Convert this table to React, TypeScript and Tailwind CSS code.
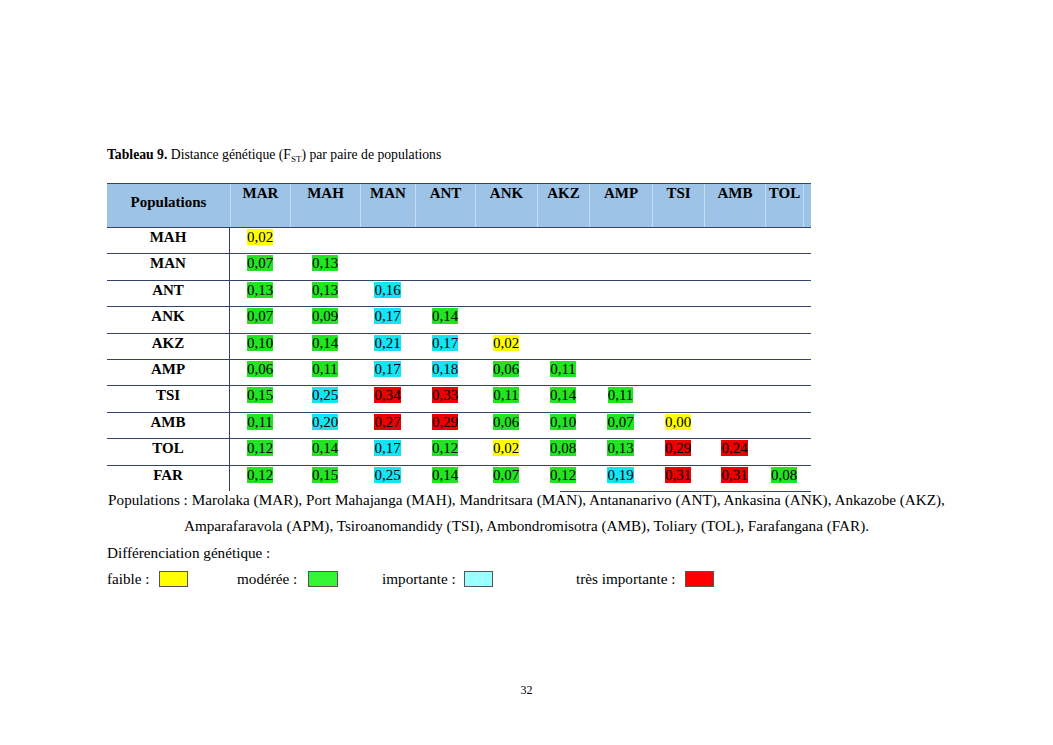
import React from 'react';

type Level = 'y' | 'g' | 'c' | 'r';

const highlight: Record<Level, string> = {
  y: 'bg-[#ffff00]',
  g: 'bg-[#22e422]',
  c: 'bg-[#14e4f4]',
  r: 'bg-[#ec0000]',
};

const columns = ['MAR', 'MAH', 'MAN', 'ANT', 'ANK', 'AKZ', 'AMP', 'TSI', 'AMB', 'TOL'];

const rows: { name: string; values: [string, Level][] }[] = [
  { name: 'MAH', values: [['0,02', 'y']] },
  { name: 'MAN', values: [['0,07', 'g'], ['0,13', 'g']] },
  { name: 'ANT', values: [['0,13', 'g'], ['0,13', 'g'], ['0,16', 'c']] },
  { name: 'ANK', values: [['0,07', 'g'], ['0,09', 'g'], ['0,17', 'c'], ['0,14', 'g']] },
  { name: 'AKZ', values: [['0,10', 'g'], ['0,14', 'g'], ['0,21', 'c'], ['0,17', 'c'], ['0,02', 'y']] },
  { name: 'AMP', values: [['0,06', 'g'], ['0,11', 'g'], ['0,17', 'c'], ['0,18', 'c'], ['0,06', 'g'], ['0,11', 'g']] },
  { name: 'TSI', values: [['0,15', 'g'], ['0,25', 'c'], ['0,34', 'r'], ['0,33', 'r'], ['0,11', 'g'], ['0,14', 'g'], ['0,11', 'g']] },
  { name: 'AMB', values: [['0,11', 'g'], ['0,20', 'c'], ['0,27', 'r'], ['0,29', 'r'], ['0,06', 'g'], ['0,10', 'g'], ['0,07', 'g'], ['0,00', 'y']] },
  { name: 'TOL', values: [['0,12', 'g'], ['0,14', 'g'], ['0,17', 'c'], ['0,12', 'g'], ['0,02', 'y'], ['0,08', 'g'], ['0,13', 'g'], ['0,29', 'r'], ['0,24', 'r']] },
  { name: 'FAR', values: [['0,12', 'g'], ['0,15', 'g'], ['0,25', 'c'], ['0,14', 'g'], ['0,07', 'g'], ['0,12', 'g'], ['0,19', 'c'], ['0,31', 'r'], ['0,31', 'r'], ['0,08', 'g']] },
];

// column widths taken from the scanned page
const gridCols = 'grid grid-cols-[123px_60px_70px_55px_60px_62px_52px_63px_52px_61px_38px_8px]';

const App: React.FC = () => {
  return (
    <div className="w-[1053px] h-[745px] bg-white text-black font-['Liberation_Serif',serif] overflow-hidden">
      <div className="pt-[147px] pl-[107px] text-[13.7px] leading-[15px]">
        <span className="font-bold">Tableau 9.</span> Distance génétique (F
        <sub className="text-[9px] align-[-1px]">ST</sub>) par paire de populations
      </div>

      <div className="mt-[21px] ml-[107px] w-[704px] text-[15px] leading-[17px]">
        {/* header */}
        <div className={`${gridCols} h-[44px] bg-[#9dc3e6] border-t border-[#34436b]`}>
          <div className="flex items-center justify-center pb-[7px] font-bold">Populations</div>
          {columns.map((col) => (
            <div key={col} className="border-l border-[#c6dcf1] pt-[1px] text-center font-bold">
              {col}
            </div>
          ))}
          <div className="border-l border-[#c6dcf1]" />
        </div>

        {/* body */}
        {rows.map((row) => (
          <div key={row.name} className={`${gridCols} h-[26.4px] border-t border-[#34436b]`}>
            <div className="border-r border-[#34436b] pt-[1px] text-center font-bold">{row.name}</div>
            {columns.map((col, i) => {
              const v = row.values[i];
              return (
                <div key={col} className="pt-[1px] text-center">
                  {v && <span className={highlight[v[1]]}>{v[0]}</span>}
                </div>
              );
            })}
            <div />
          </div>
        ))}
      </div>
      <div className="ml-[560px] w-[251px] h-0 border-t border-[#34436b] -mb-[1px]" />

      <div className="text-[15.2px] leading-[17px]">
        <div className="h-[26.5px] text-center">
          Populations : Marolaka (MAR), Port Mahajanga (MAH), Mandritsara (MAN), Antananarivo (ANT), Ankasina (ANK), Ankazobe (AKZ),
        </div>
        <div className="h-[26.5px] text-center">
          Amparafaravola (APM), Tsiroanomandidy (TSI), Ambondromisotra (AMB), Toliary (TOL), Farafangana (FAR).
        </div>
        <div className="h-[26.5px] pl-[107px]">Différenciation génétique :</div>
        <div className="flex items-center h-[17px] pl-[107px]">
          <span className="w-[52px]">faible :</span>
          <span className="w-[29px] h-[16px] bg-[#ffff00] border border-[#555]" />
          <span className="ml-[49px] w-[71px]">modérée :</span>
          <span className="w-[30px] h-[16px] bg-[#33f533] border border-[#555]" />
          <span className="ml-[44px] w-[82px]">importante :</span>
          <span className="w-[29px] h-[16px] bg-[#99ffff] border border-[#555]" />
          <span className="ml-[83px] w-[109px]">très importante :</span>
          <span className="w-[29px] h-[16px] bg-[#ff0000] border border-[#555]" />
        </div>
      </div>

      <div className="mt-[96px] text-center text-[12px] leading-[14px]">32</div>
    </div>
  );
};

export default App;
